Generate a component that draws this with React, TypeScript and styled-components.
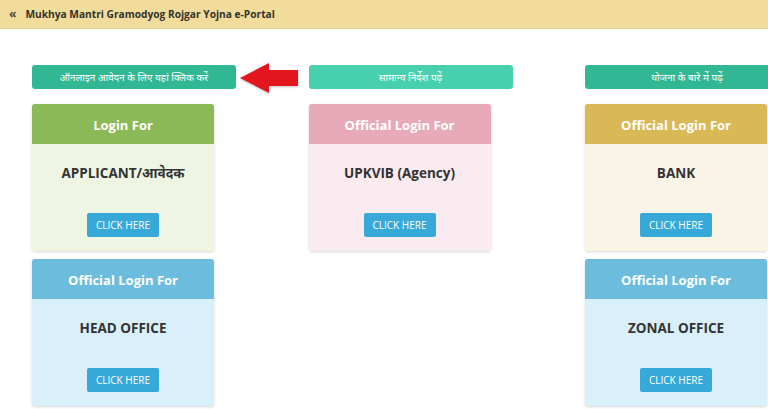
import React from "react";
import styled, { createGlobalStyle } from "styled-components";

const Global = createGlobalStyle`
  html, body { margin: 0; padding: 0; background: #ffffff; }
  body { font-family: "Open Sans", "Noto Sans", "DejaVu Sans", sans-serif; overflow: hidden; }
  * { box-sizing: border-box; }
`;

const Page = styled.div`
  width: 768px;
  height: 409px;
  overflow: hidden;
  background: #fff;
`;

const TopBar = styled.div`
  height: 29px;
  background: #f1dc9c;
  border-bottom: 1px solid #e9d38a;
  display: flex;
  align-items: center;
  padding-left: 9px;
  gap: 9px;
  font-size: 10.2px;
  font-weight: 700;
  color: #33332b;
`;

const Chevron = styled.span`
  font-size: 12px;
  font-weight: 700;
  color: #4a4a3a;
  margin-top: -2px;
`;

const Grid = styled.div`
  display: grid;
  grid-template-columns: 204px 204px 204px;
  column-gap: 72.5px;
  padding: 36px 0 0 32px;
`;

const Column = styled.div`
  display: flex;
  flex-direction: column;
  position: relative;
`;

const Notice = styled.div<{ $light?: boolean }>`
  height: 24px;
  width: 204px;
  border-radius: 3px;
  background: ${(p) => (p.$light ? "#48d0ae" : "#31b794")};
  color: #fff;
  font-size: 10px;
  display: flex;
  align-items: center;
  justify-content: center;
  font-family: "Noto Sans", "Open Sans", sans-serif;
  margin-bottom: 15px;
`;

const Arrow = styled.svg`
  position: absolute;
  left: 208px;
  top: -3px;
  filter: drop-shadow(0 1px 1px rgba(0, 0, 0, 0.25));
`;

const Card = styled.div<{ $bg: string }>`
  width: 182px;
  border-radius: 3px;
  overflow: hidden;
  background: ${(p) => p.$bg};
  box-shadow: 0 1px 3px rgba(0, 0, 0, 0.16);
  margin-bottom: 8px;
  display: flex;
  flex-direction: column;
  align-items: center;
`;

const CardHead = styled.div<{ $bg: string }>`
  width: 100%;
  height: 40px;
  padding-top: 1px;
  background: ${(p) => p.$bg};
  color: #fff;
  font-weight: 700;
  font-size: 13px;
  display: flex;
  align-items: center;
  justify-content: center;
`;

const Title = styled.div`
  margin-top: 20px;
  height: 18px;
  line-height: 18px;
  font-size: 13.5px;
  font-weight: 700;
  color: #333;
`;

const Btn = styled.div`
  margin-top: 31px;
  margin-bottom: 14px;
  width: 72px;
  height: 24px;
  border-radius: 2px;
  background: #36a9d9;
  color: #fff;
  font-size: 10px;
  display: flex;
  align-items: center;
  justify-content: center;
`;

type CardData = { head: string; headBg: string; bodyBg: string; title: string };

const green = { headBg: "#8bb955", bodyBg: "#eef6e3" };
const pink = { headBg: "#e8aab9", bodyBg: "#f9ebef" };
const gold = { headBg: "#d9b956", bodyBg: "#faf4e7" };
const blue = { headBg: "#6cbddd", bodyBg: "#d9eff9" };

const columns: { notice: string; light?: boolean; arrow?: boolean; cards: CardData[] }[] = [
  {
    notice: "ऑनलाइन आवेदन के लिए यहां क्लिक करें",
    arrow: true,
    cards: [
      { head: "Login For", title: "APPLICANT/आवेदक", ...green },
      { head: "Official Login For", title: "HEAD OFFICE", ...blue },
    ],
  },
  {
    notice: "सामान्य निर्देश पढ़ें",
    light: true,
    cards: [{ head: "Official Login For", title: "UPKVIB (Agency)", ...pink }],
  },
  {
    notice: "योजना के बारे में पढ़ें",
    cards: [
      { head: "Official Login For", title: "BANK", ...gold },
      { head: "Official Login For", title: "ZONAL OFFICE", ...blue },
    ],
  },
];

export default function App() {
  return (
    <Page>
      <Global />
      <TopBar>
        <Chevron>«</Chevron>
        <span>Mukhya Mantri Gramodyog Rojgar Yojna e-Portal</span>
      </TopBar>
      <Grid>
        {columns.map((col, i) => (
          <Column key={i}>
            <Notice $light={col.light}>{col.notice}</Notice>
            {col.arrow && (
              <Arrow width="60" height="32" viewBox="0 0 60 32">
                <polygon points="0,16 29,1 29,8 58,8 58,24 29,24 29,31" fill="#e3151f" />
              </Arrow>
            )}
            {col.cards.map((c, j) => (
              <Card key={j} $bg={c.bodyBg}>
                <CardHead $bg={c.headBg}>{c.head}</CardHead>
                <Title>{c.title}</Title>
                <Btn>CLICK HERE</Btn>
              </Card>
            ))}
          </Column>
        ))}
      </Grid>
    </Page>
  );
}
